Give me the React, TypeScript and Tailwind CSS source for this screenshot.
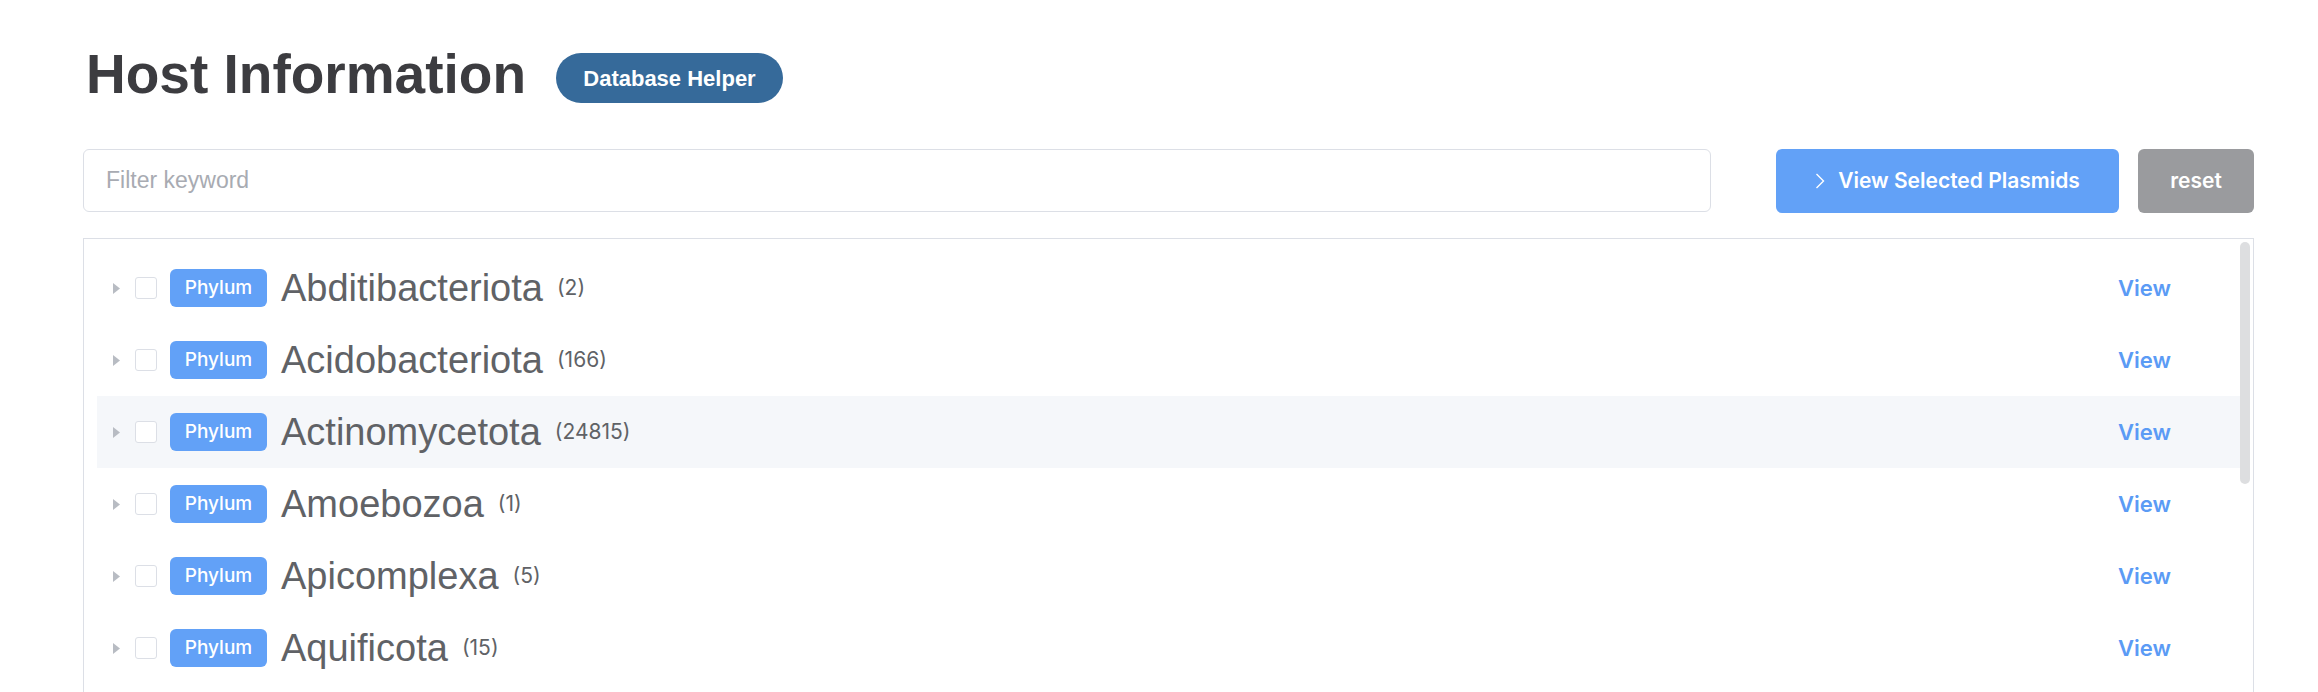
import React from "react";

const rows = [
  { name: "Abditibacteriota", count: 2 },
  { name: "Acidobacteriota", count: 166 },
  { name: "Actinomycetota", count: 24815, hover: true },
  { name: "Amoebozoa", count: 1 },
  { name: "Apicomplexa", count: 5 },
  { name: "Aquificota", count: 15 },
];

function Caret() {
  return (
    <svg width="7" height="11" viewBox="0 0 7 11" className="shrink-0">
      <polygon points="0,0 7,5.5 0,11" fill="#b8bcc3" />
    </svg>
  );
}

export default function App() {
  return (
    <div className="min-h-screen bg-white font-['Liberation_Sans',Arial,sans-serif] pl-[83px] pr-[64px]">
      <div className="flex items-start pt-[47px]">
        <h1 className="ml-[3px] text-[55px] leading-[54px] font-bold text-[#3c3c40]">
          Host Information
        </h1>
        <button className="ml-[30px] mt-[6px] h-[50px] w-[227px] rounded-full bg-[#366a9a] text-[22px] font-bold text-white flex items-center justify-center">
          Database Helper
        </button>
      </div>

      <div className="mt-[46px] flex items-start">
        <div className="flex-1 h-[63px] rounded-[6px] border border-[#dcdfe6] flex items-center">
          <input
            className="w-full h-full bg-transparent pl-[22px] text-[23px] text-[#606266] outline-none placeholder:text-[#a8abb2]"
            placeholder="Filter keyword"
          />
        </div>
        <button className="ml-[65px] h-[64px] w-[343px] rounded-[6px] bg-[#62a1f7] text-white flex items-center justify-center gap-[13px] font-['Inter',sans-serif] text-[21px] font-semibold">
          <svg width="10" height="16" viewBox="0 0 10 16" fill="none">
            <polyline points="1.5,1 8.5,8 1.5,15" stroke="white" strokeWidth="1.4" />
          </svg>
          <span>View Selected Plasmids</span>
        </button>
        <button className="ml-[19px] h-[64px] w-[116px] rounded-[6px] bg-[#9a9b9e] text-white font-['Inter',sans-serif] text-[21px] font-semibold flex items-center justify-center">
          reset
        </button>
      </div>

      <div className="relative mt-[25px] h-[600px] overflow-hidden border border-[#dcdfe6] p-[13px]">
        <div className="flex flex-col">
          {rows.map((r) => (
            <div
              key={r.name}
              className={`flex items-center h-[72px] pl-[16px] pr-[69px] ${r.hover ? "bg-[#f5f7fa]" : ""}`}
            >
              <Caret />
              <span className="ml-[15px] w-[22px] h-[22px] rounded-[3px] border border-[#dcdfe6] bg-white shrink-0" />
              <span className="ml-[13px] h-[38px] w-[97px] rounded-[6px] bg-[#62a1f7] text-white flex items-center justify-center font-['Inter',sans-serif] text-[19px] font-medium shrink-0">
                Phylum
              </span>
              <span className="ml-[14px] text-[38px] leading-none text-[#606266]">{r.name}</span>
              <span className="ml-[14px] font-['Inter',sans-serif] text-[21px] text-[#606266]">({r.count})</span>
              <span className="ml-auto font-['Inter',sans-serif] text-[22px] font-semibold text-[#5b9bf5]">
                View
              </span>
            </div>
          ))}
        </div>
        <div className="absolute right-[3px] top-[3px] w-[10px] h-[242px] rounded-full bg-[#dddee0]" />
      </div>
    </div>
  );
}
